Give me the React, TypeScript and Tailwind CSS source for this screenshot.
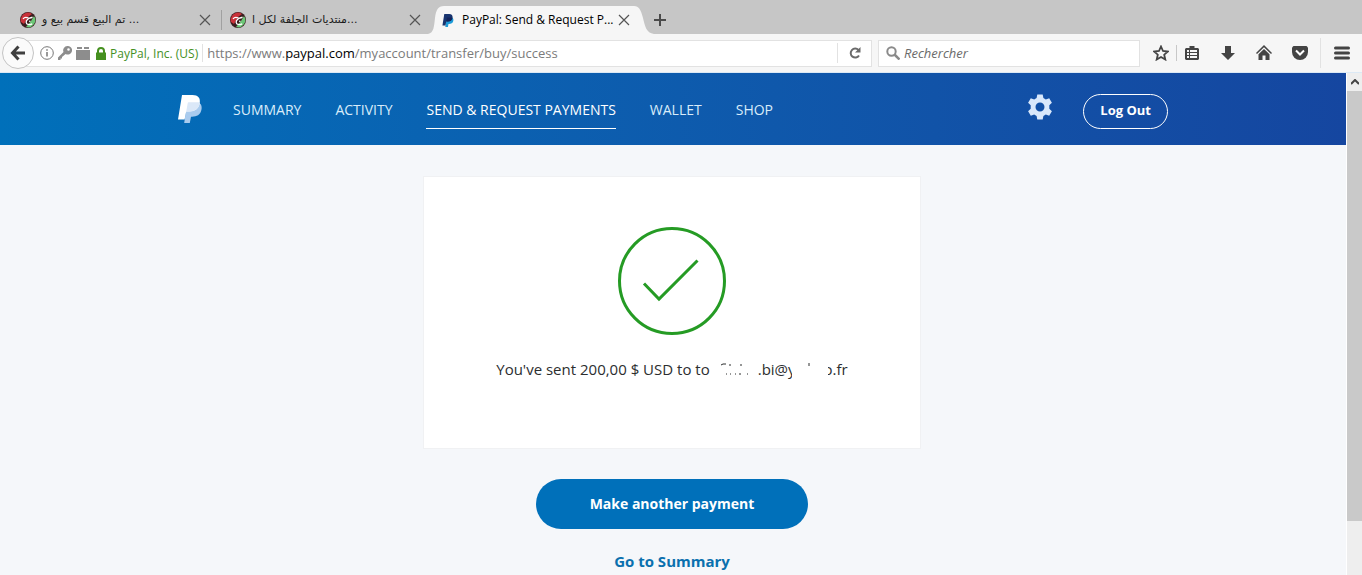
import React from 'react';

const tabs = [
  { id: 'sell', title: 'تم البيع قسم بيع و ...' },
  { id: 'forum', title: 'منتديات الجلفة لكل ا...' },
];

const navLinks = [
  { label: 'SUMMARY', active: false },
  { label: 'ACTIVITY', active: false },
  { label: 'SEND & REQUEST PAYMENTS', active: true },
  { label: 'WALLET', active: false },
  { label: 'SHOP', active: false },
];

const ForumIcon = () => (
  <svg viewBox="0 0 16 16" className="h-4 w-4 shrink-0">
    <circle cx="8" cy="8" r="8" fill="#3a1d1f" />
    <path d="M1 10A7.200 7.200 0 0 1 12 2L8 5 4 12z" fill="#c8323a" />
    <path d="M14 4A7.200 7.200 0 0 1 6 15l5-6z" fill="#6cc777" />
    <path d="M3 7c1.500-2.200 3.200-2 5-1.200 1.500.6 3 .4 4.500-.6M12.500 5.200C8.500 6.200 6 8.200 6.200 10.500c.2 2 3 2.800 6 1.300" fill="none" stroke="#fff" strokeWidth="1.300" />
    <circle cx="9.800" cy="9.300" r="0.800" fill="#fff" />
  </svg>
);

const PayPalIcon = ({ className, back, front, mid }: { className: string; back: string; front: string; mid: string }) => (
  <svg viewBox="0 0 24 28" className={className}>
    <path d="M20.500 7.500c3 1.500 3.700 4.200 2.800 7.800-1.200 4.700-4.300 6.400-9.300 6.400h-1L11.800 28H6.200L8 16z" fill={back} />
    <path d="M4 0h10.500c5.500 0 8.200 3 7.200 8.200-1.100 5.600-4.800 8.200-10.200 8.200H8.200L6.600 24.500H0z" fill={front} />
    <path d="M20.600 7.300l1.100.9c-1.100 5.600-4.800 8.200-10.200 8.200H8.200L9.700 8.300c.1-.7.6-1 1.300-1z" fill={mid} />
  </svg>
);

const CloseButton = () => (
  <button type="button" aria-label="Close tab" className="shrink-0 text-[#555]">
    <svg viewBox="0 0 12 12" className="h-3 w-3" stroke="currentColor" strokeWidth="1.2">
      <path d="M1 1l10 10M11 1L1 11" />
    </svg>
  </button>
);

const TabStrip = () => (
  <div className="flex h-[34px] items-end bg-[#c6c6c6] pl-3 text-xs text-[#1a1a1a]">
    {tabs.map((tab) => (
      <div key={tab.id} className="mb-1 flex h-5 w-[210px] items-center gap-1 border-r border-[#a0a0a0] pr-[10px] pl-2 nth-2:border-transparent">
        <ForumIcon />
        <span className="flex-1 truncate pl-[2px] font-['DejaVu_Sans',sans-serif] text-[11px]">{tab.title}</span>
        <CloseButton />
      </div>
    ))}
    <div className="flex h-7">
      <svg viewBox="0 0 16 28" className="-ml-1 h-full w-4" fill="#f6f6f6">
        <path d="M0 28C6 27 6 20 7 12 8 4 10 0 16 0v28z" />
      </svg>
      <div className="flex w-[190px] items-center bg-[#f6f6f6] pr-1">
        <PayPalIcon className="-ml-[2px] h-[13px] w-3 shrink-0" back="#1d9bd8" front="#18346f" mid="#14245a" />
        <span className="flex-1 truncate pl-2 text-black">PayPal: Send &amp; Request P...</span>
        <CloseButton />
      </div>
      <svg viewBox="0 0 20 28" className="h-full w-5" fill="#f6f6f6">
        <path d="M20 28C12 27 11 20 9 12 7 4 5 0 0 0v28z" />
      </svg>
    </div>
    <button type="button" aria-label="New tab" className="mb-2 text-[#4a4a4a]">
      <svg viewBox="0 0 12 12" className="h-3 w-3" stroke="currentColor" strokeWidth="2">
        <path d="M6 0v12M0 6h12" />
      </svg>
    </button>
  </div>
);

const AddressBar = () => (
  <div className="flex h-[39px] items-center border-b border-[#dce9f5] bg-[#f6f6f6] text-[13px]">
    <button type="button" aria-label="Back" className="z-10 ml-[2px] flex h-8 w-8 shrink-0 items-center justify-center rounded-full border border-[#c4c4c4] bg-[#fbfbfb]">
      <svg viewBox="0 0 16 16" className="h-4 w-4" fill="none" stroke="#3f3f3f" strokeWidth="3">
        <path d="M8.500 1.500L2.500 8l6 6.500M3 8h12" />
      </svg>
    </button>
    <div className="-ml-2 flex h-[27px] flex-1 items-center border border-[#e2e2e2] bg-white pl-[13px]">
      <svg viewBox="0 0 14 14" className="h-[14px] w-[14px]" fill="none" stroke="#777">
        <circle cx="7" cy="7" r="6.300" />
        <path d="M7 6v4.500M7 3.300v1.500" strokeWidth="1.500" />
      </svg>
      <svg viewBox="0 0 14 14" className="ml-1 h-[14px] w-[14px]" fill="#8d8d8d">
        <path fillRule="evenodd" d="M9.500 0A4.300 4.300 0 0 0 5.500 6L0 11.500V14h2.500v-1.500H4V11l3.600-3A4.300 4.300 0 1 0 9.500 0zm1 2.200a1.300 1.300 0 1 1 0 2.600 1.300 1.300 0 0 1 0-2.600z" />
      </svg>
      <svg viewBox="0 0 14 14" className="ml-1 h-[14px] w-[14px]" fill="#8d8d8d">
        <path d="M0 4h14v10H0zM1 1h5v2H1zM8 1h5v2H8z" />
      </svg>
      <svg viewBox="0 0 10 13" className="ml-[6px] h-[13px] w-[10px]" fill="#45901f">
        <path fillRule="evenodd" d="M0 5.500h1V4a4 4 0 0 1 8 0v1.500h1V13H0zM3 5.500h4V4a2 2 0 0 0-4 0z" />
      </svg>
      <span className="ml-1 border-r border-[#e2e2e2] pt-[2px] pr-1 text-xs text-[#45901f]">PayPal, Inc. (US)</span>
      <span className="flex-1 pt-[2px] pl-1 text-[#7b7b7b]">
        https://www.<span className="text-black">paypal.com</span>/myaccount/transfer/buy/success
      </span>
      <button type="button" aria-label="Reload" className="flex h-5 w-[34px] items-center justify-center border-l border-[#e2e2e2]">
        <svg viewBox="0 0 12 12" className="h-3 w-3" fill="none" stroke="#6a6a6a" strokeWidth="2">
          <path d="M10 8.500A4.500 4.500 0 1 1 9.500 3" />
          <path d="M11.500 0v5.500H6z" fill="#6a6a6a" stroke="none" />
        </svg>
      </button>
    </div>
    <label className="ml-[6px] flex h-[27px] w-[262px] items-center border border-[#e2e2e2] bg-white pl-[7px]">
      <svg viewBox="0 0 14 14" className="h-[14px] w-[14px] shrink-0" fill="none" stroke="#8a8a8a" strokeWidth="2">
        <circle cx="5.500" cy="5.500" r="4.200" />
        <path d="M8.500 8.500l5 5" strokeWidth="2.500" />
      </svg>
      <input type="search" aria-label="Rechercher" placeholder="Rechercher" className="ml-1 w-full pt-[2px] italic outline-none placeholder:text-[#6b6b6b]" />
    </label>
    <div className="flex items-center pl-[13px] text-[#444]">
      <button type="button" aria-label="Bookmark" className="mr-[7px]">
        <svg viewBox="0 0 16 16" className="h-4 w-4" fill="none" stroke="currentColor" strokeWidth="1.800">
          <path d="M8 1.500l2 4.500 4.800.5-3.600 3.200 1.100 4.800L8 12l-4.300 2.500 1.100-4.800L1.200 6.500 6 6z" />
        </svg>
      </button>
      <button type="button" aria-label="Bookmarks list" className="border-l border-[#c8c8c8] pl-[7px]">
        <svg viewBox="0 0 16 16" className="h-4 w-4" fill="currentColor">
          <path fillRule="evenodd" d="M2 3h3.500V1h5v2H14l1 1v10l-1 1H2l-1-1V4zm1 2v2h2V5zm3 0v2h7V5zM3 8v2h2V8zm3 0v2h7V8zm-3 3v2h2v-2zm3 0v2h7v-2z" />
        </svg>
      </button>
      <button type="button" aria-label="Downloads" className="ml-5">
        <svg viewBox="0 0 16 16" className="h-4 w-4" fill="currentColor">
          <path d="M5 1h6v7h4l-7 7-7-7h4z" />
        </svg>
      </button>
      <button type="button" aria-label="Home" className="ml-5">
        <svg viewBox="0 0 16 16" className="h-4 w-4" fill="currentColor">
          <path d="M8 0l8 8-1 1-7-6.800L1 9 0 8zM8 4l5.500 5.300V15h-4v-4.500h-3V15h-4V9.300z" />
        </svg>
      </button>
      <button type="button" aria-label="Pocket" className="ml-5">
        <svg viewBox="0 0 16 16" className="h-4 w-4">
          <path d="M1.500 1h13L16 2.500V7a8 8 0 0 1-16 0V2.500z" fill="currentColor" />
          <path d="M4 5.500l4 4 4-4" fill="none" stroke="#fff" strokeWidth="2" />
        </svg>
      </button>
      <button type="button" aria-label="Menu" className="ml-3 border-l border-[#e2e2e2] py-2 pr-3 pl-[13px]">
        <svg viewBox="0 0 16 14" className="h-[14px] w-4" stroke="currentColor" strokeWidth="3" strokeLinecap="round">
          <path d="M1.500 2h13M1.500 7h13M1.500 12h13" />
        </svg>
      </button>
    </div>
  </div>
);

const Header = () => (
  <header className="bg-linear-to-r from-[#0070ba] to-[#1546a0]">
    <div className="mx-auto flex h-[72px] max-w-[990px] items-center">
      <a href="#" aria-label="PayPal">
        <PayPalIcon className="h-7 w-6" back="#a9cbee" front="#ffffff" mid="#dbe8f8" />
      </a>
      <nav className="ml-[31px] flex gap-[34px] pt-[2px] text-sm leading-5 text-[#d9ecfa]">
        {navLinks.map((link) => (
          <a
            key={link.label}
            href="#"
            className={link.active ? 'border-b border-white pt-2 pb-2 font-medium text-white' : 'border-b border-transparent pt-2 pb-2'}
          >
            {link.label}
          </a>
        ))}
      </nav>
      <button type="button" aria-label="Settings" className="mr-[30px] mb-1 ml-auto">
        <svg viewBox="0 0 26 26" className="h-[26px] w-[26px]" fill="#d9e8fb">
          <path
            fillRule="evenodd"
            d="M10.300.5h5.400l.7 3.500 2.400 1.400 3.400-1.200 2.700 4.600-2.600 2.400v3.600l2.600 2.400-2.700 4.600-3.400-1.200-2.400 1.400-.7 3.500h-5.400L9.600 22l-2.400-1.400-3.400 1.200-2.700-4.600 2.600-2.400v-3.600L1.100 8.800l2.700-4.600 3.400 1.200L9.600 4zM13 8.500a4.500 4.500 0 1 0 0 9 4.500 4.500 0 0 0 0-9z"
          />
        </svg>
      </button>
      <button type="button" className="mt-1 h-[35px] rounded-full border border-white px-4 text-[13px] font-bold text-white">
        Log Out
      </button>
    </div>
  </header>
);

// The recipient's address is mostly rubbed out, only bits of the letters remain
const Message = () => (
  <p className="flex items-center justify-center text-[15px] leading-5 whitespace-pre text-[#2c2e2f]">
    You've sent 200,00 $ USD to to
    <svg viewBox="0 0 48 20" className="h-5 w-12" fill="none" stroke="#2c2e2f">
      <path d="M11 6l2-1h3M20 5v2M31 5v2M16 15h1M20 15h1M25 15h1M29 15h2M37 15h1" />
    </svg>
    .bi@y
    <svg viewBox="0 0 36 20" className="z-10 -mx-1 h-5 w-9 bg-white" fill="none" stroke="#2c2e2f">
      <path d="M17 4v3" />
    </svg>
    o.fr
  </p>
);

const ScrollBar = () => (
  <div className="flex w-4 shrink-0 flex-col border-l border-white bg-[#eeeeee]">
    <div className="flex h-[18px] items-center justify-center">
      <svg viewBox="0 0 8 6" className="h-[6px] w-2" fill="none" stroke="#444" strokeWidth="2">
        <path d="M0 5l4-4 4 4" />
      </svg>
    </div>
    <div className="flex-8 bg-[#c9c9c9]" />
    <div className="flex-1" />
  </div>
);

const App = () => {
  return (
    <div className="flex min-h-screen flex-col bg-[#f5f7fa] font-['Open_Sans','Noto_Sans',sans-serif]">
      <TabStrip />
      <AddressBar />
      <div className="flex flex-1">
        <div className="min-w-0 flex-1">
          <Header />
          <main className="flex flex-col items-center pt-[31px] pr-[2px]">
            <section className="w-full max-w-[498px] border border-[#f0f1f3] bg-white pt-[49px] pb-[69px]">
              <svg viewBox="0 0 110 110" className="mx-auto mb-[23px] h-[110px] w-[110px]" fill="none" stroke="#259b24" strokeWidth="3">
                <circle cx="55" cy="55" r="52.500" />
                <path d="M27 57.500l15 15.500 38.500-38.500" />
              </svg>
              <Message />
            </section>
            <button type="button" className="mt-[30px] h-[50px] w-[272px] rounded-full bg-[#0070ba] text-sm font-bold text-white">
              Make another payment
            </button>
            <a href="#" className="mt-[21px] text-[15px] font-bold text-[#0a70ae]">
              Go to Summary
            </a>
          </main>
        </div>
        <ScrollBar />
      </div>
    </div>
  );
};

export default App;
